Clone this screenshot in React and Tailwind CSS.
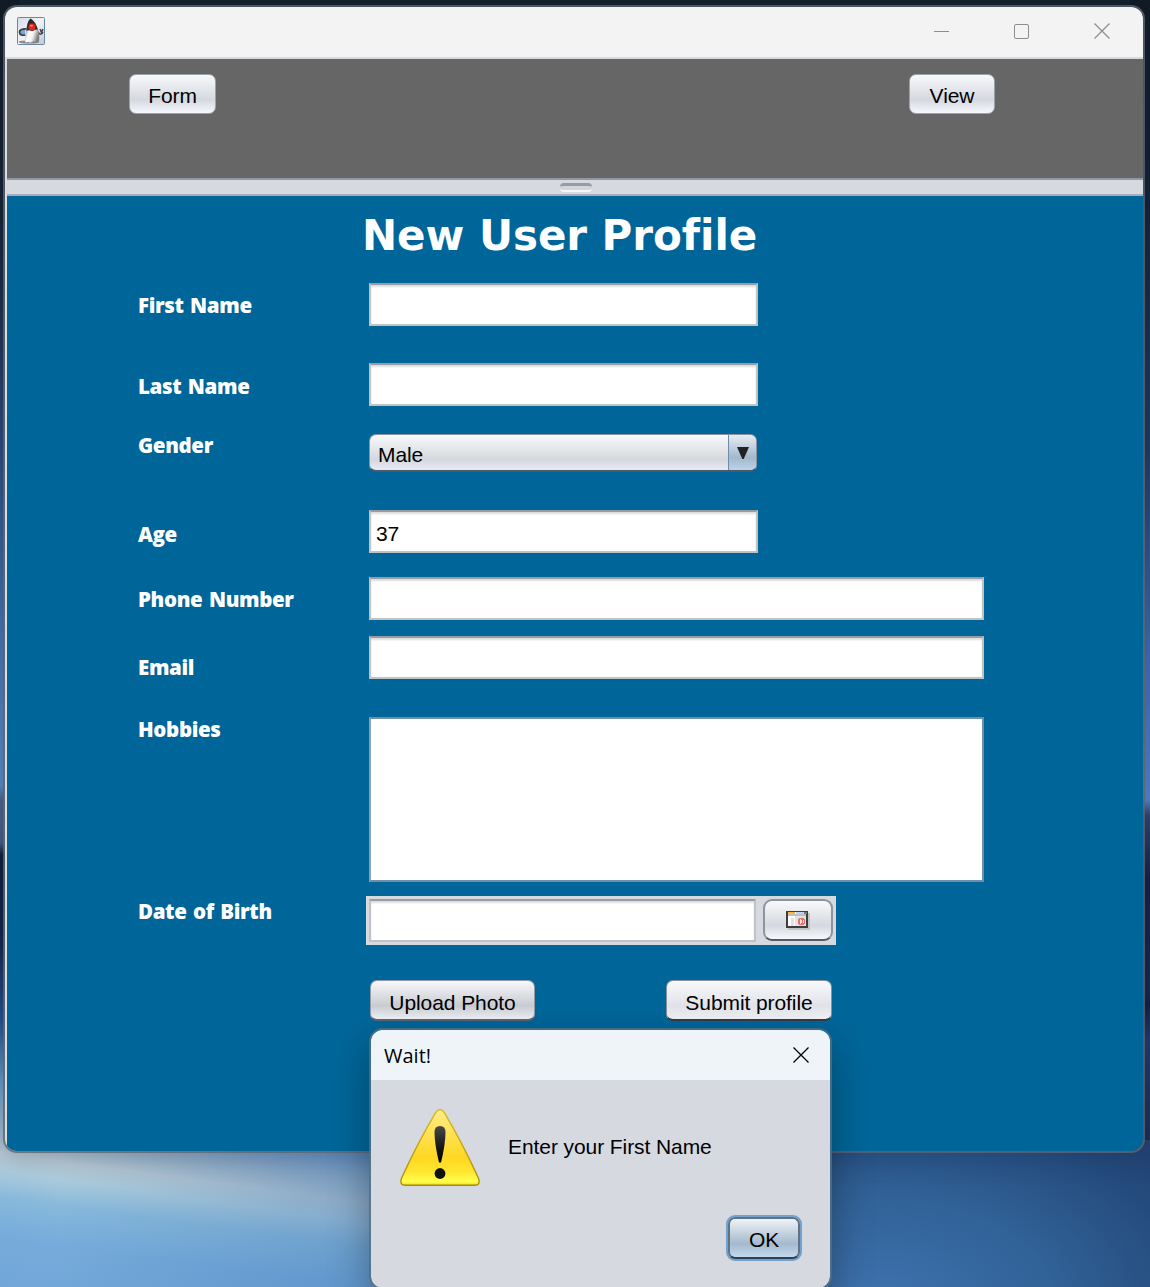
import React from "react";
import clsx from "clsx";

const arial = "font-['Liberation_Sans',Arial,sans-serif] text-[21px] leading-6 tracking-[-0.08px] text-black";

function DukeIcon() {
  return (
    <svg width="28" height="28" viewBox="0 0 28 28" className="shrink-0">
      <defs>
        <linearGradient id="dukeBg" x1="0" y1="0" x2="1" y2="1">
          <stop offset="0" stopColor="#d3dbe9" />
          <stop offset=".5" stopColor="#f1f2f7" />
          <stop offset="1" stopColor="#c3c7d3" />
        </linearGradient>
        <linearGradient id="dukeBody" x1="0" y1="0" x2="1" y2=".3">
          <stop offset="0" stopColor="#858585" />
          <stop offset=".35" stopColor="#ffffff" />
          <stop offset=".65" stopColor="#f0f0f0" />
          <stop offset="1" stopColor="#7d7d7d" />
        </linearGradient>
      </defs>
      <rect x=".5" y=".5" width="27" height="27" rx="1" fill="url(#dukeBg)" stroke="#6688a3" />
      <ellipse cx="12" cy="25" rx="10.500" ry="1.600" fill="#6a6a6a" opacity=".75" />
      <path d="M2 13l6-1v6l-5 .500z" fill="#7ba6d6" />
      <path d="M10 12C6 11.500 2 12.500 2.500 15.500s3.500 3 6 2.500" fill="none" stroke="#3a3a3a" strokeWidth="1.600" />
      <path d="M21 14.500c1 3.500 4 3.500 4.800.500M23 12l1.500 3.500L26 12" fill="none" stroke="#444" strokeWidth="1.500" />
      <path d="M9.500 11h11c1.800 4 2.300 9 1.500 13.500-2 1.500-4 0-5-.500-2 1.500-4 1.800-6 .800-1.500 1-3.500.700-3-1.500.700-3.500 0-8.300 1.500-12.300z" fill="url(#dukeBody)" />
      <path d="M13.500 1.500c3 1.800 6.500 6 7.500 11.500-2-1.500-4 1-6 1-2.500 0-3.500-1.500-5.500 0 0-5 1.300-10.500 4-12.500z" fill="#2b2b2b" />
      <circle cx="15" cy="10" r="3.500" fill="#e3231d" />
      <ellipse cx="14.500" cy="8.800" rx="1.600" ry="1" fill="#ff7a70" />
    </svg>
  );
}

function CalendarIcon() {
  return (
    <svg width="24" height="19" viewBox="0 0 24 19" shapeRendering="crispEdges">
      <rect x="2" y="2" width="22" height="17" fill="#c4c5c3" />
      <rect width="22" height="17" fill="#3d3d3d" />
      <rect x="2" y="1" width="18" height="14" fill="#fff" />
      <rect x="2" y="1" width="7" height="2" fill="#ffb640" />
      <rect x="10" y="1" width="8" height="2" fill="#b8d4ff" />
      <rect x="18" y="1" width="3" height="2" fill="#777" />
      <rect x="2" y="3" width="18" height="2" fill="#c0c0c0" />
      <rect x="5" y="7" width="3" height="8" fill="#e2e2e2" />
      <rect x="9" y="5" width="2" height="10" fill="#e2e2e2" />
      <rect x="11" y="5" width="9" height="10" fill="#e2e2e2" />
      <path d="M13 7h5v1h1v5h-1v1h-5v-1h-1V8h1z" fill="#e8706c" />
      <path d="M14 8h1v1h1v3h-1v1h-1z" fill="#fbd9d7" />
      <path d="M17 9h1v3h-1z" fill="#fbd9d7" />
    </svg>
  );
}

function WarningIcon() {
  return (
    <svg width="82" height="80" viewBox="0 0 82 80" className="shrink-0">
      <defs>
        <linearGradient id="warnFill" x1="0" y1="0" x2="0" y2="1">
          <stop offset="0" stopColor="#ffeb8c" />
          <stop offset=".25" stopColor="#ffe45e" />
          <stop offset=".63" stopColor="#ffd721" />
          <stop offset=".82" stopColor="#ffe62e" />
          <stop offset=".95" stopColor="#ffff4d" />
          <stop offset="1" stopColor="#f2df1e" />
        </linearGradient>
        <linearGradient id="warnEdge" x1="0" y1="0" x2="0" y2="1">
          <stop offset="0" stopColor="#dcbc18" />
          <stop offset="1" stopColor="#a98c0a" />
        </linearGradient>
        <linearGradient id="warnMark" x1="0" y1="0" x2="0" y2="1">
          <stop offset="0" stopColor="#484848" />
          <stop offset=".6" stopColor="#151515" />
          <stop offset="1" stopColor="#000" />
        </linearGradient>
      </defs>
      <path
        d="M36.800 4.300Q41-1.400 45.200 4.300Q64 36 79.600 70.500Q82 77.200 75.500 77.200H6.500Q0 77.200 2.400 70.500Q18 36 36.800 4.300Z"
        fill="url(#warnFill)"
        stroke="url(#warnEdge)"
        strokeWidth="1.400"
      />
      <path d="M35.500 24q0-6 5.500-6t5.500 6q0 12-4.500 30.500h-2q-4.500-18.500-4.500-30.500z" fill="url(#warnMark)" />
      <circle cx="41" cy="65.500" r="5.400" fill="#111" />
    </svg>
  );
}

function Cross({ className }) {
  return (
    <svg width="16" height="16" viewBox="0 0 16 16" fill="none" stroke="currentColor" className={className}>
      <path d="M.5.5l15 15M15.500.5l-15 15" strokeWidth="1.300" />
    </svg>
  );
}

const tones = {
  toolbar: "rounded-[7px] border border-[#9ea2a9] pt-1 from-[#f8f9fb] via-[#d5d8df] to-[#f5f8fe]",
  upload: "rounded-[7px] border border-b-2 border-[#929aa6] border-b-[#5c6672] pt-[6px] from-[#f7f8fa] via-[#c9ccd2] to-[#f0f3f7]",
  submit: "rounded-[7px] border border-b-2 border-[#8a929e] border-b-[#343c46] pt-[6px] from-[#f8f9fb] via-[#e1e3e9] to-[#f2f4f8]",
  calendar: "rounded-[9px] border-2 border-[#8f939b] border-b-[#54585f] from-[#f8f9fb] via-[#d5d8df] to-[#f5f8fe]",
  primary: "rounded-[7px] border-2 border-[#5f7384] border-b-[#2e4152] pt-1 from-[#eff3f7] via-[#a5b9cd] to-[#c3d9ef] ring-2 ring-[#72a2cf]",
};

function Button({ tone, className, children }) {
  return (
    <button className={clsx("flex items-center justify-center bg-linear-to-b via-65%", tones[tone], arial, className)}>
      {children}
    </button>
  );
}

function Input({ className, value = "" }) {
  return (
    <div
      className={clsx(
        "flex h-[43px] items-center border-2 border-[#c0c2c4] border-t-[#999ca2] bg-white pl-[5px] pt-[4px]",
        "shadow-[inset_0_2px_2px_#dcdddf]",
        arial,
        className
      )}
    >
      {value}
    </div>
  );
}

function Row({ label, className, labelClass, children }) {
  return (
    <div className={clsx("flex items-start", className)}>
      <div
        className={clsx(
          "w-[231px] shrink-0 font-['Open_Sans','Noto_Sans',sans-serif] text-[20.500px] font-extrabold leading-7 tracking-[-0.35px] [word-spacing:1.500px] text-white",
          labelClass
        )}
      >
        {label}
      </div>
      {children}
    </div>
  );
}

function MainWindow() {
  return (
    <section className="absolute left-[3px] top-[5px] flex h-[1148px] w-[1142px] flex-col overflow-hidden rounded-[14px] border-2 border-[#5c6672]/80 bg-[#006699] bg-clip-padding shadow-[0_4px_24px_rgba(20,40,80,0.25)]">
      <header className="flex h-[50px] shrink-0 items-center bg-[#f3f3f3] pb-[2px] pl-3 pr-[33px] text-[#8d8d8d]">
        <DukeIcon />
        <div className="ml-auto flex items-center gap-[65px]">
          <span className="h-px w-[15px] bg-current" />
          <span className="size-[15px] rounded-[2px] border-[1.500px] border-current" />
          <Cross />
        </div>
      </header>
      <div className="flex min-h-0 grow flex-col border-l-2 border-[#d9dce0]">
        <nav className="flex h-[121px] shrink-0 items-start justify-between border-t-2 border-[#d6d9df] bg-[#666666] pl-[122px] pr-[148px] pt-[15px]">
          <Button tone="toolbar" className="h-10 w-[87px]">Form</Button>
          <Button tone="toolbar" className="h-10 w-[86px]">View</Button>
        </nav>
        <div className="flex h-[18px] shrink-0 justify-center border-y-2 border-t-[#9297a1] border-b-[#a9acb8] bg-[#d6d9df] pl-px pt-[3px]">
          <span className="h-[9px] w-8 rounded-[4px] border-b-2 border-t-[3px] border-b-[#f5f5f8] border-t-[#959ba7] bg-[#d1d5dc]" />
        </div>
        <main className="flex grow flex-col pl-[131px]">
          <h1 className="ml-[224px] mt-[14px] h-[52px] whitespace-nowrap font-['DejaVu_Sans',Verdana,sans-serif] text-[42px] font-bold leading-[52px] tracking-[-0.04px] text-white">
            New User Profile
          </h1>
          <Row label="First Name" className="mt-[21px] h-[80px]" labelClass="pt-[8px]">
            <Input className="w-[389px]" />
          </Row>
          <Row label="Last Name" className="h-[71px]" labelClass="pt-[9px]">
            <Input className="w-[389px]" />
          </Row>
          <Row label="Gender" className="h-[76px]" labelClass="-mt-[3px]">
            <div
              className={clsx(
                "flex h-[38px] w-[388px] items-stretch overflow-hidden rounded-[7px] border border-b-2 border-[#8a93a1] border-b-[#4e5968] bg-linear-to-b from-[#f8f9fb] via-[#d5d8dd] via-70% to-[#e8ebf7]",
                arial
              )}
            >
              <span className="grow pl-[8px] pt-[8px]">Male</span>
              <span className="flex w-[28px] justify-center border-l border-[#6c8daa] bg-linear-to-b from-[#e6edf3] via-[#a3b8cc] via-65% to-[#bbd3ea] pt-[12px]">
                <svg width="12" height="12" viewBox="0 0 12 12">
                  <path d="M0 0h12L6.700 12H5.300z" fill="#202325" />
                </svg>
              </span>
            </div>
          </Row>
          <Row label="Age" className="h-[67px]" labelClass="pt-[10px]">
            <Input className="w-[389px]" value="37" />
          </Row>
          <Row label="Phone Number" className="h-[59px]" labelClass="pt-[8px]">
            <Input className="w-[615px]" />
          </Row>
          <Row label="Email" className="h-[81px]" labelClass="pt-[17px]">
            <Input className="w-[615px]" />
          </Row>
          <Row label="Hobbies" className="h-[179px]" labelClass="-mt-[2px]">
            <div className="h-[165px] w-[615px] border-2 border-[#6d8fa8] border-l-[#8ba2b3] bg-white" />
          </Row>
          <Row label="Date of Birth" className="h-[84px]" labelClass="pt-[1px]">
            <div className="-ml-[3px] flex h-[49px] w-[470px] items-start justify-between bg-[#d6d9df] px-[3px] pt-[3px]">
              <Input className="w-[387px]" />
              <Button tone="calendar" className="h-[42px] w-[70px]">
                <CalendarIcon />
              </Button>
            </div>
          </Row>
          <div className="ml-[232px] flex w-[462px] justify-between">
            <Button tone="upload" className="h-[41px] w-[165px]">Upload Photo</Button>
            <Button tone="submit" className="h-[41px] w-[166px]">Submit profile</Button>
          </div>
        </main>
      </div>
    </section>
  );
}

function AlertDialog() {
  return (
    <section className="absolute left-[369px] top-[1028px] flex h-[262px] w-[463px] flex-col overflow-hidden rounded-[14px] border-2 border-[#526f83]/80 bg-[#d6d9e0] bg-clip-padding shadow-[0_16px_40px_rgba(0,0,0,0.32)]">
      <header className="flex h-[50px] shrink-0 items-center justify-between bg-[#eff4f9] pl-[13px] pr-[21px]">
        <h2 className="pt-[2px] font-['Open_Sans','Noto_Sans',sans-serif] text-[20px] leading-7 text-black">Wait!</h2>
        <Cross className="text-black" />
      </header>
      <div className="flex pl-7 pt-7">
        <WarningIcon />
        <p className={clsx("ml-[27px] pt-[27px]", arial)}>Enter your First Name</p>
      </div>
      <Button tone="primary" className="ml-auto mr-[30px] mt-[29px] h-[42px] w-[72px]">
        OK
      </Button>
    </section>
  );
}

export default function App() {
  return (
    <div className="relative h-[1287px] w-[1150px] overflow-hidden bg-[#14202c]">
      <div className="flex h-[1140px] justify-between">
        <div className="w-5 bg-[linear-gradient(to_bottom,#121a24_0px,#16202f_200px,#1d2c48_300px,#2c4a7c_450px,#4470a8_620px,#5b8ac4_785px,#4f6188_800px,#465a83_843px,#111c38_855px,#14244a_940px,#24508a_1020px,#6a9bc2_1085px,#a8bccb_1140px)]" />
        <div className="w-5 bg-[linear-gradient(to_bottom,#121a24_0px,#142132_200px,#1c3a62_450px,#3f6ca6_650px,#5585c0_800px,#30446c_815px,#151f42_880px,#17264c_990px,#12203f_1005px,#203a6c_1040px,#1a2c50_1140px)]" />
      </div>
      <div className="flex h-[147px]">
        <div className="w-[600px] bg-[linear-gradient(to_right,transparent_10%,rgba(60,115,180,0.4)_62%),linear-gradient(188deg,#7fa0c0_22%,#9db4c5_32%,#b9c9d2_42%,#abcbdc_50%,#88b9db_61%,#76abdb_78%,#72a6d9_100%)]" />
        <div className="grow bg-[radial-gradient(ellipse_at_50%_110%,#3f73ae_0%,#316298_45%,#254c7e_80%,#1f3b68_110%)]" />
      </div>
      <MainWindow />
      <AlertDialog />
    </div>
  );
}
